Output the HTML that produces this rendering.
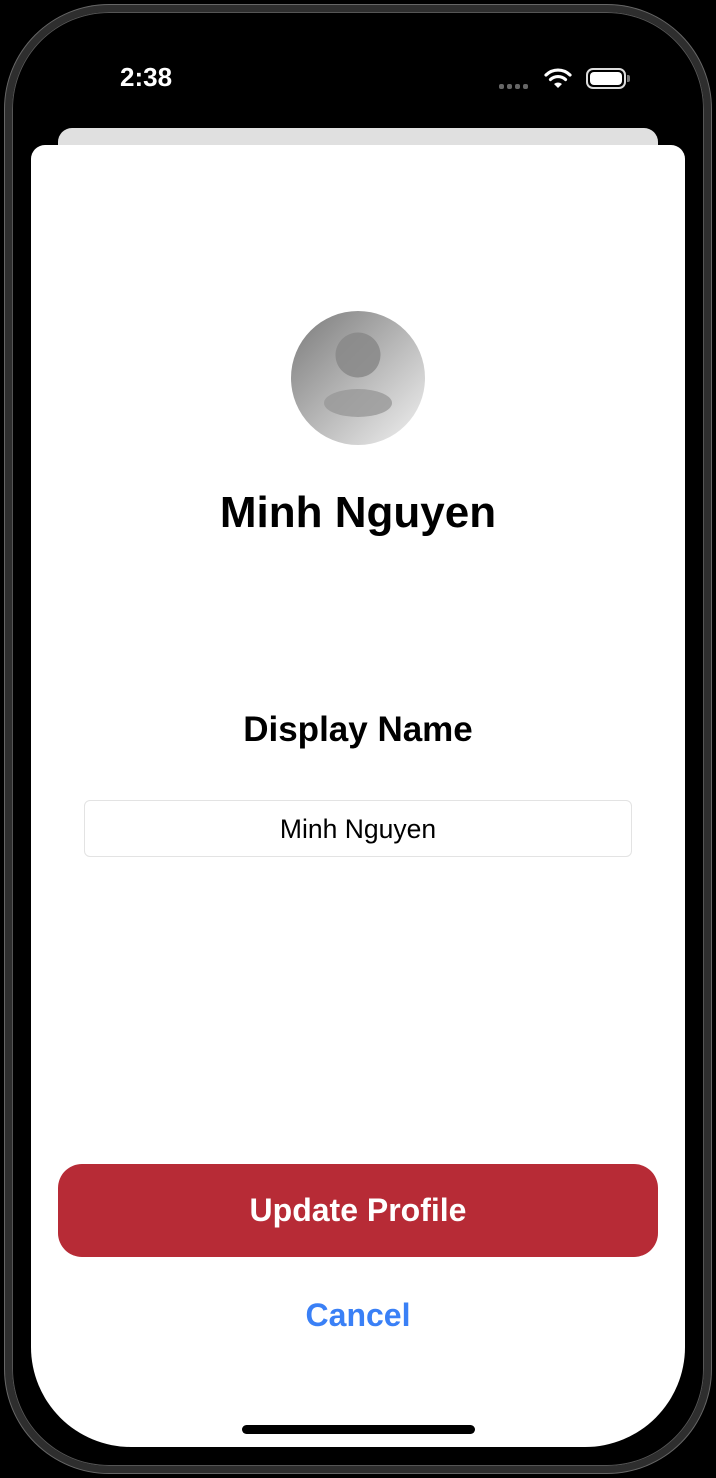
<!DOCTYPE html>
<html><head><meta charset="utf-8"><style>
*{margin:0;padding:0;box-sizing:border-box}
body{width:716px;height:1478px;background:#000;position:relative;overflow:hidden;font-family:"Liberation Sans",sans-serif}
.frame{position:absolute;left:5px;top:5px;width:706px;height:1468px;border-radius:104px;border:7px solid #2e2e2e;box-shadow:0 0 0 1px #555 inset,0 0 0 1px #666;background:#000}
.back{position:absolute;left:58px;top:128px;width:600px;height:40px;background:#e0e0e0;border-radius:14px}
.sheet{position:absolute;left:31px;top:145px;width:654px;height:1302px;background:#fff;border-radius:14px 14px 100px 100px}
.t{position:absolute;left:0;width:716px;text-align:center}
</style></head><body>
<div class="frame"></div>
<div style="position:absolute;left:120px;top:62px;color:#fff;font-size:26px;font-weight:bold">2:38</div>
<div style="position:absolute;left:499px;top:84px;width:34px;height:4px;display:flex;gap:3px">
<span style="width:5px;height:5px;border-radius:2px;background:#666"></span><span style="width:5px;height:5px;border-radius:2px;background:#666"></span><span style="width:5px;height:5px;border-radius:2px;background:#666"></span><span style="width:5px;height:5px;border-radius:2px;background:#666"></span></div>
<svg style="position:absolute;left:544px;top:67px" width="28" height="22" viewBox="0 0 28 22"><path d="M2 8 A17 17 0 0 1 26 8" stroke="#fff" stroke-width="3.2" fill="none" stroke-linecap="round"/><path d="M6.5 12.5 A11 11 0 0 1 21.5 12.5" stroke="#fff" stroke-width="3.2" fill="none" stroke-linecap="round"/><path d="M10 17 L14 21 L18 17 A6 6 0 0 0 10 17Z" fill="#fff"/></svg>
<div style="position:absolute;left:586px;top:68px;width:40px;height:21px;border:2px solid #ddd;border-radius:7px;padding:2px"><div style="width:100%;height:100%;background:#fff;border-radius:4px"></div></div>
<div style="position:absolute;left:627px;top:75px;width:3px;height:7px;background:#777;border-radius:0 2px 2px 0"></div>
<div class="back"></div>
<div class="sheet"></div>
<svg style="position:absolute;left:291px;top:311px" width="134" height="134" viewBox="0 0 134 134"><defs><linearGradient id="g" x1="0" y1="0" x2="1" y2="1"><stop offset="0" stop-color="#7a7a7a"/><stop offset="1" stop-color="#f2f2f2"/></linearGradient></defs><circle cx="67" cy="67" r="67" fill="url(#g)"/><circle cx="67" cy="44" r="22.5" fill="#888" opacity=".85"/><ellipse cx="67" cy="92" rx="34" ry="14" fill="#999" opacity=".8"/></svg>
<div class="t" style="top:488px;font-size:44px;font-weight:bold;color:#000">Minh Nguyen</div>
<div class="t" style="top:710px;font-size:35px;font-weight:bold;color:#000">Display Name</div>
<div style="position:absolute;left:84px;top:800px;width:548px;height:57px;border:1px solid #e3e3e3;border-radius:6px;text-align:center;line-height:57px;font-size:26.5px;color:#000">Minh Nguyen</div>
<div style="position:absolute;left:58px;top:1164px;width:600px;height:93px;background:#b72b36;border-radius:24px;text-align:center;line-height:93px;color:#fff;font-size:32px;font-weight:bold">Update Profile</div>
<div class="t" style="top:1297px;font-size:32px;font-weight:bold;color:#3a80f6">Cancel</div>
<div style="position:absolute;left:242px;top:1425px;width:233px;height:9px;background:#000;border-radius:5px"></div>
</body></html>
